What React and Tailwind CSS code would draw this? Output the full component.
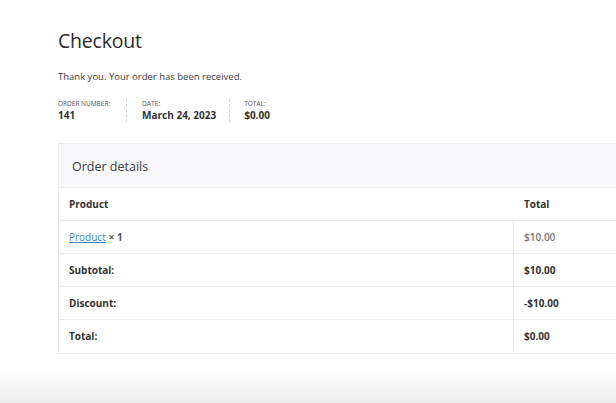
import React from "react";

const rows = [
  { label: "Subtotal:", value: "$10.00" },
  { label: "Discount:", value: "-$10.00" },
  { label: "Total:", value: "$0.00" },
];

export default function App() {
  return (
    <div
      className="relative w-[616px] h-[403px] overflow-hidden bg-white text-[#3c3c3c]"
      style={{ fontFamily: '"Open Sans", "Noto Sans", sans-serif' }}
    >
      <div className="pl-[58px] pt-[27px]">
        <h1 className="text-[19.5px] leading-[28px] font-normal text-[#2b2b2b] tracking-[-0.2px]">Checkout</h1>
        <p className="mt-[15px] text-[9.5px] leading-[14px] text-[#3c3c3c]">
          Thank you. Your order has been received.
        </p>

        {/* order overview */}
        <div className="mt-[15px] flex">
          <div className="pr-[16px] border-r border-dashed border-[#d4d4d4]">
            <div className="text-[6.5px] leading-[9px] uppercase text-[#555]">Order number:</div>
            <div className="text-[10px] leading-[14px] font-bold text-[#333]">141</div>
          </div>
          <div className="pl-[15px] pr-[13px] border-r border-dashed border-[#d4d4d4]">
            <div className="text-[6.5px] leading-[9px] uppercase text-[#555]">Date:</div>
            <div className="text-[10px] leading-[14px] font-bold text-[#333]">March 24, 2023</div>
          </div>
          <div className="px-[14px]">
            <div className="text-[6.5px] leading-[9px] uppercase text-[#555]">Total:</div>
            <div className="text-[10px] leading-[14px] font-bold text-[#333]">$0.00</div>
          </div>
        </div>

        {/* order details */}
        <div className="mt-[21px] w-[640px] border border-[#ececee]">
          <div className="h-[44px] flex items-center pl-[13px] pt-[3px] bg-[#f8f8fa] border-b border-[#ececee]">
            <h2 className="text-[12.5px] font-normal text-[#3a3a3a]">Order details</h2>
          </div>
          <div className="flex h-[33px] items-center border-b border-[#ececee] text-[10px] font-bold text-[#333]">
            <div className="w-[455px] pl-[10px]">Product</div>
            <div className="pl-[10px]">Total</div>
          </div>
          <div className="flex h-[33px] border-b border-[#ececee] text-[10px]">
            <div className="w-[455px] pl-[10px] flex items-center border-r border-[#ececee]">
              <a href="#" className="text-[#3b82c4] underline">Product</a>
              <span className="ml-[3px] font-bold text-[#555]">× 1</span>
            </div>
            <div className="pl-[10px] flex items-center font-semibold text-[#777]">$10.00</div>
          </div>
          {rows.map((r, i) => (
            <div
              key={r.label}
              className={`flex h-[33px] text-[10px] font-bold text-[#333] ${i < rows.length - 1 ? "border-b border-[#ececee]" : ""}`}
            >
              <div className="w-[455px] pl-[10px] flex items-center border-r border-[#ececee]">{r.label}</div>
              <div className="pl-[10px] flex items-center">{r.value}</div>
            </div>
          ))}
        </div>
      </div>

      <div className="absolute left-0 right-0 bottom-0 h-[36px] bg-gradient-to-b from-white to-[#ededed]" />
    </div>
  );
}
